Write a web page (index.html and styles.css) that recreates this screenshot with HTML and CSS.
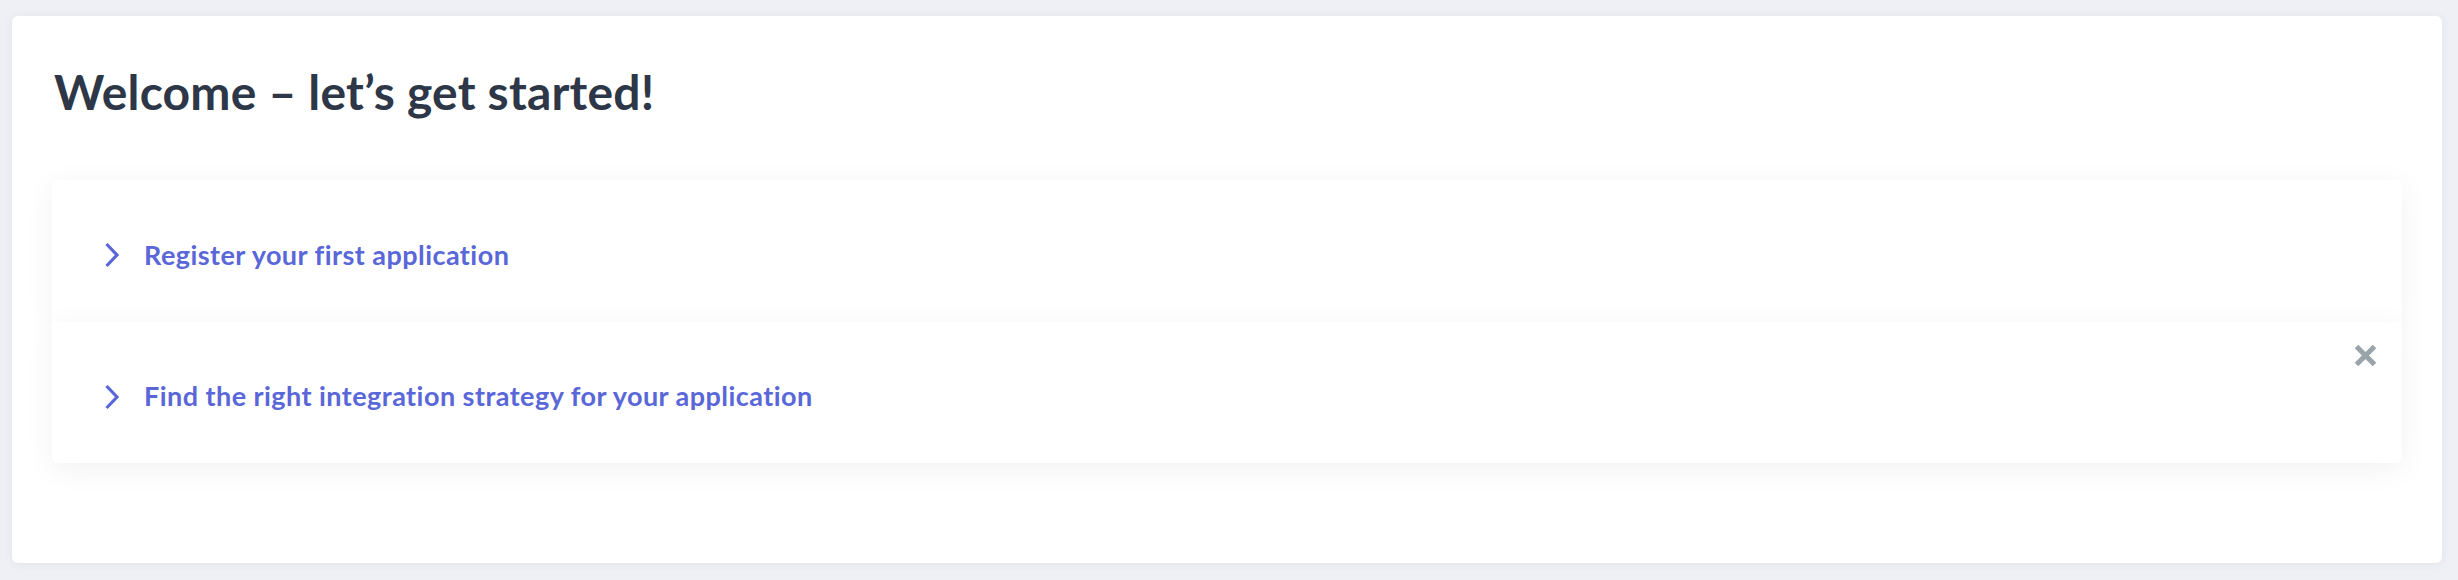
FILE: index.html
```html
<!DOCTYPE html>
<html lang="en">
<head>
<meta charset="utf-8">
<title>Welcome</title>
<link rel="stylesheet" href="styles.css">
</head>
<body>
<main class="page">
  <section class="card">
    <h1 class="title">Welcome – let’s get started!</h1>
    <div class="steps">
      <div class="step step-first">
        <svg class="chevron" viewBox="0 0 16 26" width="16" height="26" aria-hidden="true"><polyline points="2.5,2 13,13 2.5,24" fill="none" stroke="#5a67d8" stroke-width="3.2"/></svg>
        <span class="step-label">Register your first application</span>
      </div>
      <div class="step step-last">
        <svg class="chevron" viewBox="0 0 16 26" width="16" height="26" aria-hidden="true"><polyline points="2.5,2 13,13 2.5,24" fill="none" stroke="#5a67d8" stroke-width="3.2"/></svg>
        <span class="step-label">Find the right integration strategy for your application</span>
        <button class="dismiss" aria-label="Dismiss">
          <svg viewBox="0 0 23 23" width="23" height="23"><path d="M2.5 2.5 L20.5 20.5 M20.5 2.5 L2.5 20.5" stroke="#99a3aa" stroke-width="5" fill="none"/></svg>
        </button>
      </div>
    </div>
  </section>
</main>
</body>
</html>
```

FILE: styles.css
```css
html, body {
  margin: 0;
  padding: 0;
}
body {
  background: #eef0f5;
  font-family: Lato, "Liberation Sans", sans-serif;
}
.page {
  padding: 16px 16px 17px 12px;
}
.card {
  background: #ffffff;
  border-radius: 6px;
  box-shadow: 0 1px 10px rgba(40, 50, 90, 0.07);
  padding: 46px 40px 100px 40px;
}
.title {
  margin: 0 0 0 2px;
  font-size: 48px;
  line-height: 60px;
  font-weight: 700;
  letter-spacing: 0.2px;
  color: #2d3748;
}
.steps {
  margin-top: 58px;
  display: flex;
  flex-direction: column;
}
.step {
  position: relative;
  display: flex;
  align-items: center;
  height: 141px;
  padding: 6px 0 0 52px;
  box-sizing: border-box;
  background: #ffffff;
  box-shadow: 0 6px 30px rgba(0, 0, 0, 0.06);
}
.step-first {
  height: 142px;
  border-radius: 6px 6px 0 0;
}
.step-last {
  border-radius: 0 0 6px 6px;
}
.chevron {
  flex: none;
  margin: 2px 24px 0 0;
}
.step-label {
  font-size: 27px;
  font-weight: 700;
  letter-spacing: 0.45px;
  color: #5a67d8;
}
.dismiss {
  position: absolute;
  top: 22px;
  right: 25px;
  width: 23px;
  height: 23px;
  padding: 0;
  border: 0;
  background: none;
  display: block;
}
.dismiss svg {
  display: block;
}
```
